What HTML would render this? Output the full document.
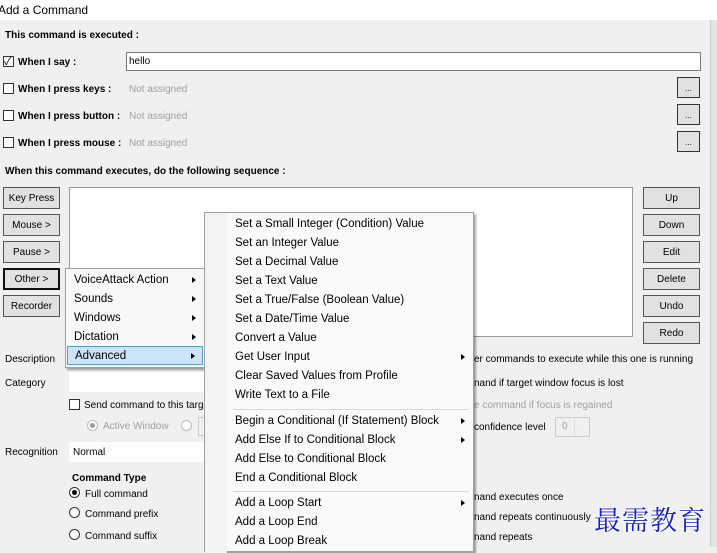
<!DOCTYPE html>
<html><head><meta charset="utf-8"><style>
*{margin:0;padding:0;box-sizing:border-box}
body{width:717px;height:547px;overflow:hidden;background:#f0f0f0;font-family:"Liberation Sans","Noto Sans CJK SC",sans-serif;font-size:10px;color:#000;position:relative}
.a{position:absolute;white-space:nowrap}
.b{font-weight:bold}
.cb{position:absolute;width:11px;height:11px;border:1px solid #333;background:#fff}
.btn{position:absolute;border:1px solid #adadad;background:#e1e1e1;text-align:center;font-size:10px;line-height:22px}
.tb{position:absolute;background:#fff;border:1px solid #7a7a7a}
.g{color:#a0a0a0}
.m{position:absolute;background:#f8f8f8;border:1px solid #a0a0a0;box-shadow:2px 2px 2px rgba(0,0,0,.35);font-size:11.5px}
.mi{position:absolute;left:0;right:0;height:19px;line-height:21px;white-space:nowrap}
.ar{position:absolute;right:8px;top:7px;width:0;height:0;border-left:4px solid #000;border-top:3.5px solid transparent;border-bottom:3.5px solid transparent}
.sep{position:absolute;left:28px;right:4px;height:1px;background:#d7d7d7}
.rd{position:absolute;width:11px;height:11px;border:1px solid #333;border-radius:50%;background:#fff}
</style></head><body>
<div class="a" style="left:0;top:0;width:717px;height:20px;background:#fff"></div>
<div class="a" style="left:-2px;top:3px;font-size:12px">Add a Command</div>
<div class="a" style="left:710px;top:20px;width:7px;height:527px;background:#e4e4e4;border-left:1px solid #ccc"></div>

<div class="a b" style="left:5px;top:30px">This command is executed :</div>
<div class="cb" style="left:3px;top:56px"></div><div class="a" style="left:4px;top:53px;font-size:11px">✓</div>
<div class="a b" style="left:18px;top:57px">When I say :</div>
<div class="tb" style="left:126px;top:52px;width:575px;height:19px"></div><div class="a" style="left:129px;top:56px">hello</div>
<div class="cb" style="left:3px;top:83px"></div><div class="a b" style="left:18px;top:84px">When I press keys :</div><div class="a g" style="left:129px;top:84px">Not assigned</div>
<div class="cb" style="left:3px;top:110px"></div><div class="a b" style="left:18px;top:111px">When I press button :</div><div class="a g" style="left:129px;top:111px">Not assigned</div>
<div class="cb" style="left:3px;top:137px"></div><div class="a b" style="left:18px;top:138px">When I press mouse :</div><div class="a g" style="left:129px;top:138px">Not assigned</div>
<div class="btn" style="left:677px;top:77px;width:23px;height:21px;border-color:#333;font-size:8px;line-height:21px">...</div>
<div class="btn" style="left:677px;top:104px;width:23px;height:21px;border-color:#333;font-size:8px;line-height:21px">...</div>
<div class="btn" style="left:677px;top:131px;width:23px;height:21px;border-color:#333;font-size:8px;line-height:21px">...</div>
<div class="a b" style="left:5px;top:166px">When this command executes, do the following sequence :</div>

<div class="btn" style="left:3px;top:187px;width:57px;height:22px;border-color:#555">Key Press</div>
<div class="btn" style="left:3px;top:214px;width:57px;height:22px;border-color:#555">Mouse &gt;</div>
<div class="btn" style="left:3px;top:241px;width:57px;height:22px;border-color:#555">Pause &gt;</div>
<div class="btn" style="left:3px;top:268px;width:57px;height:22px;border:2px solid #111;line-height:20px">Other &gt;</div>
<div class="btn" style="left:3px;top:295px;width:57px;height:22px;border-color:#555">Recorder</div>
<div class="tb" style="left:69px;top:187px;width:564px;height:150px;border-color:#999"></div>
<div class="btn" style="left:643px;top:187px;width:57px;height:22px;border-color:#555">Up</div>
<div class="btn" style="left:643px;top:214px;width:57px;height:22px;border-color:#555">Down</div>
<div class="btn" style="left:643px;top:241px;width:57px;height:22px;border-color:#555">Edit</div>
<div class="btn" style="left:643px;top:268px;width:57px;height:22px;border-color:#555">Delete</div>
<div class="btn" style="left:643px;top:295px;width:57px;height:22px;border-color:#555">Undo</div>
<div class="btn" style="left:643px;top:322px;width:57px;height:22px;border-color:#555">Redo</div>

<div class="a" style="left:5px;top:354px">Description</div>
<div class="a" style="left:5px;top:378px">Category</div>
<div class="a" style="left:69px;top:372px;width:140px;height:20px;background:#fff"></div>
<div class="cb" style="left:69px;top:399px"></div><div class="a" style="left:84px;top:400px">Send command to this targ</div>
<div class="rd" style="left:87px;top:420px;border-color:#bbb"></div><div class="a" style="left:90px;top:423px;width:5px;height:5px;border-radius:50%;background:#999"></div>
<div class="a g" style="left:103px;top:421px">Active Window</div>
<div class="rd" style="left:181px;top:420px;border-color:#bbb"></div>
<div class="a" style="left:198px;top:417px;width:8px;height:19px;border:1px solid #ccc;border-right:none"></div>
<div class="a" style="left:5px;top:447px">Recognition</div>
<div class="a" style="left:69px;top:442px;width:140px;height:20px;background:#fff"></div><div class="a" style="left:73px;top:447px">Normal</div>
<div class="a b" style="left:72px;top:473px">Command Type</div>
<div class="rd" style="left:69px;top:487px"></div><div class="a" style="left:72px;top:490px;width:5px;height:5px;border-radius:50%;background:#000"></div><div class="a" style="left:85px;top:489px">Full command</div>
<div class="rd" style="left:69px;top:507px"></div><div class="a" style="left:85px;top:509px">Command prefix</div>
<div class="rd" style="left:69px;top:529px"></div><div class="a" style="left:85px;top:531px">Command suffix</div>

<div class="a" style="left:474px;top:354px">er commands to execute while this one is running</div>
<div class="a" style="left:474px;top:378px">nand if target window focus is lost</div>
<div class="a g" style="left:474px;top:400px">e command if focus is regained</div>
<div class="a" style="left:474px;top:422px">confidence level</div>
<div class="a" style="left:555px;top:417px;width:35px;height:20px;border:1px solid #ccc"></div><div class="a g" style="left:562px;top:421px">0</div>
<div class="a" style="left:574px;top:418px;width:1px;height:18px;background:#ddd"></div>
<div class="a" style="left:474px;top:492px">nand executes once</div>
<div class="a" style="left:474px;top:512px">nand repeats continuously</div>
<div class="a" style="left:474px;top:532px">nand repeats</div>

<div class="m" style="left:65px;top:268px;width:140px;height:100px">
<div class="mi" style="top:1px;padding-left:8px">VoiceAttack Action<span class="ar"></span></div>
<div class="mi" style="top:20px;padding-left:8px">Sounds<span class="ar"></span></div>
<div class="mi" style="top:39px;padding-left:8px">Windows<span class="ar"></span></div>
<div class="mi" style="top:58px;padding-left:8px">Dictation<span class="ar"></span></div>
<div class="mi" style="top:77px;left:1px;right:1px;padding-left:7px;background:#cce4f7;border:1px solid #5b9bd5;line-height:19px">Advanced<span class="ar" style="top:6px;right:7px"></span></div>
</div>

<div class="m" style="left:204px;top:212px;width:270px;height:340px;background:#fafafa">
<div class="a" style="left:0;top:0;width:22px;height:340px;background:#f3f3f3"></div>
<div class="mi" style="top:1px;padding-left:30px">Set a Small Integer (Condition) Value</div>
<div class="mi" style="top:20px;padding-left:30px">Set an Integer Value</div>
<div class="mi" style="top:39px;padding-left:30px">Set a Decimal Value</div>
<div class="mi" style="top:58px;padding-left:30px">Set a Text Value</div>
<div class="mi" style="top:77px;padding-left:30px">Set a True/False (Boolean Value)</div>
<div class="mi" style="top:96px;padding-left:30px">Set a Date/Time Value</div>
<div class="mi" style="top:115px;padding-left:30px">Convert a Value</div>
<div class="mi" style="top:134px;padding-left:30px">Get User Input<span class="ar"></span></div>
<div class="mi" style="top:153px;padding-left:30px">Clear Saved Values from Profile</div>
<div class="mi" style="top:172px;padding-left:30px">Write Text to a File</div>
<div class="sep" style="top:196px"></div>
<div class="mi" style="top:198px;padding-left:30px">Begin a Conditional (If Statement) Block<span class="ar"></span></div>
<div class="mi" style="top:217px;padding-left:30px">Add Else If to Conditional Block<span class="ar"></span></div>
<div class="mi" style="top:236px;padding-left:30px">Add Else to Conditional Block</div>
<div class="mi" style="top:255px;padding-left:30px">End a Conditional Block</div>
<div class="sep" style="top:278px"></div>
<div class="mi" style="top:280px;padding-left:30px">Add a Loop Start<span class="ar"></span></div>
<div class="mi" style="top:299px;padding-left:30px">Add a Loop End</div>
<div class="mi" style="top:318px;padding-left:30px">Add a Loop Break</div>
</div>

<div class="a" style="left:594px;top:499px;font-family:'Noto Serif CJK SC','WenQuanYi Zen Hei',serif;font-size:27px;color:#1520d0;letter-spacing:1px;text-shadow:1px 1px 0 #fff,-1px -1px 0 #fff,1px -1px 0 #fff,-1px 1px 0 #fff">最需教育</div>
</body></html>
